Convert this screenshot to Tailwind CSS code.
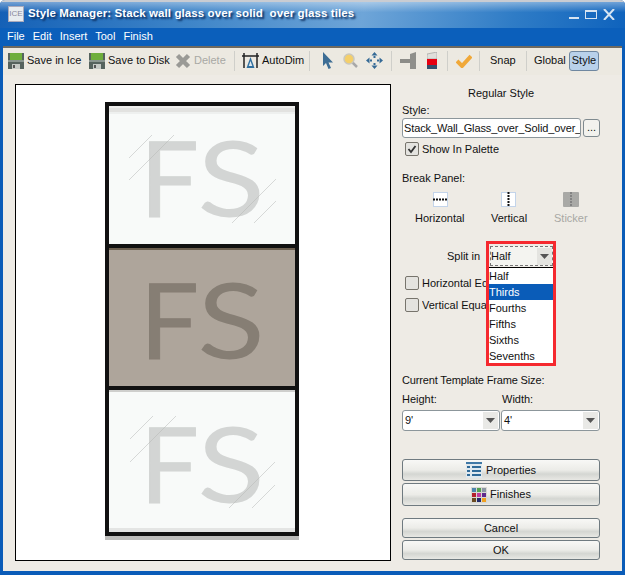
<!DOCTYPE html>
<html lang="en">
<head>
<meta charset="UTF-8">
<title>Style Manager</title>
<script src="https://cdn.jsdelivr.net/npm/@tailwindcss/browser@4"></script>
</head>
<body class="bg-white">
<div class="relative w-[625px] h-[575px] overflow-hidden flex flex-col bg-[#0a5cb8] [font-family:'Liberation_Sans',sans-serif] text-[11px] text-[#111] rounded-t-[5px]">

  <!-- Title bar -->
  <div class="h-[28px] flex items-center pl-[8px] pr-[10px] pb-[2px] border-t-2 border-[#c9ccd2] bg-[linear-gradient(180deg,#ffffff66_0,#ffffff00_40%),linear-gradient(100deg,#1460b6_0%,#3d84c8_30%,#6ea5d8_58%,#2f7cc6_82%,#0f63bd_100%)]">
    <div class="w-[16px] h-[16px] bg-[#e8ecef] border border-[#aab] text-[8px] leading-[14px] text-[#889] text-center">ICE</div>
    <div class="ml-[4px] text-[11.5px] font-bold text-white tracking-[0.1px] [text-shadow:2px_2px_2px_#0a2a5a]">Style Manager: Stack wall glass over solid&nbsp; over glass tiles</div>
    <div class="ml-auto flex items-center gap-[6px]">
      <svg width="10" height="11" viewBox="0 0 10 11"><rect x="0" y="8" width="10" height="2" fill="#d6e4f2"/></svg>
      <svg width="12" height="11" viewBox="0 0 12 11"><rect x="0.5" y="1.500" width="11" height="8" fill="none" stroke="#d6e4f2"/><rect x="0" y="1" width="12" height="2" fill="#d6e4f2"/></svg>
      <svg width="12" height="11" viewBox="0 0 12 11"><path d="M1 0l10 11M11 0L1 11" stroke="#d6e4f2" stroke-width="2"/></svg>
    </div>
  </div>

  <!-- Menu -->
  <div class="h-[18px] flex items-center pl-[7px] pb-[2px] gap-[8px] text-white bg-[#0b5fbb]">
    <span>File</span><span>Edit</span><span>Insert</span><span>Tool</span><span>Finish</span>
  </div>

  <div class="flex-1 flex flex-col mx-[3px] mb-[4px] bg-[#eeebe5] border-t-2 border-[#6f6a60]">
    <!-- Toolbar -->
    <div class="h-[27px] flex items-center pl-[5px] pb-[2px] bg-[#ece9e1] whitespace-nowrap">
      <svg class="w-[16px] h-[16px]" viewBox="0 0 16 16"><rect width="16" height="16" fill="#56635e"/><rect x="2" y="0" width="12" height="7" fill="#6fae3c"/><rect y="7" width="16" height="2" fill="#8a9690"/><rect x="4" y="11" width="8" height="5" fill="#c6cac6"/><rect x="5" y="12" width="2" height="3" fill="#555"/></svg>
      <span class="ml-[3px] w-[53px]">Save in Ice</span>
      <svg class="ml-[9px] w-[16px] h-[16px]" viewBox="0 0 16 16"><rect width="16" height="16" fill="#56635e"/><rect x="2" y="0" width="12" height="7" fill="#6fae3c"/><rect y="7" width="16" height="2" fill="#8a9690"/><rect x="4" y="11" width="8" height="5" fill="#c6cac6"/><rect x="5" y="12" width="2" height="3" fill="#555"/></svg>
      <span class="ml-[3px] w-[59px]">Save to Disk</span>
      <svg class="ml-[8px] w-[16px] h-[16px]" viewBox="0 0 16 16"><path d="M2.500 2.500l11 11M13.500 2.500l-11 11" stroke="#9a9a96" stroke-width="4.500"/></svg>
      <span class="ml-[3px] w-[31px] text-[#a8a8a4]">Delete</span>
      <div class="ml-[9px] w-px h-[20px] bg-[#cfcfca]"></div>
      <svg class="ml-[7px] w-[17px] h-[17px]" viewBox="0 0 17 17"><path d="M2 1v15M15 1v15M0 4h17" stroke="#222" stroke-width="1.500"/><path d="M8.500 5L4.500 16h8z" fill="#2f6f9f"/><path d="M8.500 9l-1.800 5h3.600z" fill="#dfe9ef"/></svg>
      <span class="ml-[3px] w-[39px]">AutoDim</span>
      <div class="ml-[8px] w-px h-[20px] bg-[#cfcfca]"></div>
      <svg class="ml-[12px] w-[11px] h-[17px]" viewBox="0 0 11 17"><path d="M1 0v14l3-3 2.500 6 2.500-1-2.500-5.500H11z" fill="#3d6d94"/></svg>
      <svg class="ml-[10px] w-[15px] h-[15px]" viewBox="0 0 15 15"><path d="M9 9l5 5" stroke="#a8a8a8" stroke-width="2.500"/><circle cx="6" cy="6" r="5" fill="#f4cf6a" stroke="#c9c7bd" stroke-width="1.500"/></svg>
      <svg class="ml-[8px] w-[17px] h-[17px]" viewBox="0 0 17 17" fill="#356a96"><path d="M8.500 0l3 3.500h-6zM8.500 17l3-3.500h-6zM0 8.500l3.500-3v6zM17 8.500l-3.500-3v6z"/><rect x="7.500" y="4" width="2" height="2"/><rect x="7.500" y="11" width="2" height="2"/><rect x="4" y="7.500" width="2" height="2"/><rect x="11" y="7.500" width="2" height="2"/></svg>
      <div class="ml-[8px] w-px h-[20px] bg-[#cfcfca]"></div>
      <svg class="ml-[8px] w-[16px] h-[17px]" viewBox="0 0 16 17"><rect x="0" y="7" width="10" height="4" fill="#8c8c88"/><path d="M10 2l6-2v17h-6z" fill="#8f8f8b"/></svg>
      <svg class="ml-[11px] w-[10px] h-[17px]" viewBox="0 0 10 17"><path d="M0 2l10-2v7H0z" fill="#dfdfdb" stroke="#888" stroke-width=".5"/><rect y="7" width="10" height="6" fill="#e60012"/><rect y="13" width="10" height="4" fill="#33506e"/></svg>
      <div class="ml-[10px] w-px h-[20px] bg-[#cfcfca]"></div>
      <svg class="ml-[8px] w-[16px] h-[14px]" viewBox="0 0 16 14"><path d="M1 7l5 5 9-10" fill="none" stroke="#f0a838" stroke-width="4"/></svg>
      <div class="ml-[7px] w-px h-[20px] bg-[#cfcfca]"></div>
      <span class="ml-[10px] w-[25px]">Snap</span>
      <div class="ml-[11px] w-px h-[20px] bg-[#cfcfca]"></div>
      <span class="ml-[7px] w-[29px]">Global</span>
      <span class="ml-[6px] h-[20px] w-[30px] flex items-center justify-center rounded-[3px] border border-[#6f87a0] bg-[#b9d1ea]">Style</span>
    </div>

    <div class="flex-1 flex pl-[12px] pt-[9px]">
      <!-- Canvas -->
      <div class="w-[376px] h-[477px] bg-white border border-black flex flex-col items-center pt-[17px] pr-[2px]">
        <div class="w-[194px] flex flex-col border-4 border-[#111] gap-[4px] bg-[#111] shadow-[0_4px_0_#bdbdbb]">
          <div class="relative h-[138px] bg-[#f8faf9] flex items-center pl-[31px] overflow-hidden">
            <div class="absolute top-0 inset-x-0 h-[8px] bg-[#e2e2e0] border-t-2 border-b-2 border-t-[#efefed] border-b-[#eef0ef]"></div>
            <span class="[font-family:Lato,sans-serif] text-[104px] leading-none text-[#d3d5d4] mt-[4px] flex"><span class="[-webkit-text-stroke-width:1px]">F</span><span class="ml-[4px] scale-x-[1.2]">S</span></span>
            <svg class="absolute inset-0" width="186" height="138"><path d="M20 52L43 29M20 74L65 29M123 117L167 73M145 117L167 95" stroke="#b4b6b5" stroke-width=".5" fill="none"/></svg>
          </div>
          <div class="relative h-[138px] bg-[#aea59b] flex items-center pl-[31px] overflow-hidden">
            <div class="absolute top-0 inset-x-0 h-[2px] bg-[#6b5e4e]"></div>
            <span class="[font-family:Lato,sans-serif] text-[104px] leading-none text-[#867e74] mt-[4px] flex"><span class="[-webkit-text-stroke-width:1px]">F</span><span class="ml-[4px] scale-x-[1.2]">S</span></span>
          </div>
          <div class="relative h-[142px] bg-[#f8faf9] flex items-center pl-[31px] overflow-hidden">
            <div class="absolute top-0 inset-x-0 h-[2px] bg-[#cfcfcd]"></div>
            <div class="absolute bottom-0 inset-x-0 h-[4px] bg-[#e4e5e4]"></div>
            <span class="[font-family:Lato,sans-serif] text-[104px] leading-none text-[#d3d5d4] mt-[4px] flex"><span class="[-webkit-text-stroke-width:1px]">F</span><span class="ml-[4px] scale-x-[1.2]">S</span></span>
            <svg class="absolute inset-0" width="186" height="142"><path d="M21 49L44 26M21 72L67 26M120 118L166 72M143 118L166 95" stroke="#b4b6b5" stroke-width=".5" fill="none"/></svg>
          </div>
        </div>
      </div>

      <!-- Right panel -->
      <div class="ml-[11px] w-[198px] flex flex-col">
        <div class="h-[18px] leading-[18px] text-center">Regular Style</div>
        <div class="h-[16px] leading-[16px]">Style:</div>
        <div class="h-[20px] flex gap-[2px]">
          <div class="w-[179px] border border-[#8c969b] rounded-[3px] bg-white pl-[1px] leading-[18px] tracking-[-0.1px] overflow-hidden whitespace-nowrap">Stack_Wall_Glass_over_Solid_over_Glass</div>
          <div class="w-[17px] h-[18px] mt-[1px] border border-[#7f8a8f] rounded-[3px] bg-[#f2f2ee] text-center leading-[14px]">...</div>
        </div>
        <div class="mt-[4px] h-[14px] flex items-center pl-[3px]">
          <div class="w-[14px] h-[14px] border border-[#77746c] rounded-[2px] bg-[#e4e3df] flex items-center justify-center">
            <svg width="10" height="10" viewBox="0 0 10 10"><path d="M1.500 5l2.500 3 4.500-6" fill="none" stroke="#333" stroke-width="1.800"/></svg>
          </div>
          <span class="ml-[3px]">Show In Palette</span>
        </div>
        <div class="mt-[14px] h-[16px] leading-[16px]">Break Panel:</div>
        <div class="mt-[6px] h-[17px] flex">
          <svg class="ml-[31px] w-[15px] h-[15px]" viewBox="0 0 15 15"><rect x=".5" y=".5" width="14" height="14" fill="#fff" stroke="#c3d4ea"/><path d="M0 7.500h15" stroke="#111" stroke-width="2" stroke-dasharray="2 1"/></svg>
          <svg class="ml-[53px] w-[15px] h-[15px]" viewBox="0 0 15 15"><rect x=".5" y=".5" width="14" height="14" fill="#fff" stroke="#c3d4ea"/><path d="M7.500 0v15" stroke="#111" stroke-width="2" stroke-dasharray="2 1"/></svg>
          <svg class="ml-[47px] w-[16px] h-[15px]" viewBox="0 0 16 15"><rect x="0" y="0" width="16" height="15" rx="1" fill="#a9a9a6"/><path d="M8 0v15" stroke="#777" stroke-width="1.500" stroke-dasharray="2 1"/></svg>
        </div>
        <div class="mt-[1px] h-[16px] leading-[16px] flex">
          <span class="ml-[13px] w-[76px]">Horizontal</span>
          <span class="w-[63px]">Vertical</span>
          <span class="text-[#a8a8a4]">Sticker</span>
        </div>
        <div class="mt-[20px] h-[20px] flex items-center">
          <span class="ml-[45px] w-[43px]">Split in</span>
          <div class="w-[63px] h-[20px] flex items-center justify-between border border-dashed border-[#777] bg-[#f4f4f0]">
            <span>Half</span>
            <div class="w-[15px] h-[17px] flex items-center justify-center bg-[#e4e4e0]"><svg width="9" height="5" viewBox="0 0 9 5"><path d="M0 0h9L4.500 5z" fill="#555"/></svg></div>
          </div>
        </div>
        <div class="mt-[10px] h-[14px] flex items-center pl-[3px]">
          <div class="w-[14px] h-[14px] border border-[#77746c] rounded-[2px] bg-[#e4e3df]"></div>
          <span class="ml-[3px] w-[64px] overflow-hidden whitespace-nowrap">Horizontal Equal</span>
        </div>
        <div class="mt-[8px] h-[14px] flex items-center pl-[3px]">
          <div class="w-[14px] h-[14px] border border-[#77746c] rounded-[2px] bg-[#e4e3df]"></div>
          <span class="ml-[3px] w-[64px] overflow-hidden whitespace-nowrap">Vertical Equal</span>
        </div>
        <div class="mt-[60px] h-[16px] leading-[16px] tracking-[-0.15px]">Current Template Frame Size:</div>
        <div class="mt-[3px] h-[16px] leading-[16px] flex"><span class="w-[100px]">Height:</span><span>Width:</span></div>
        <div class="mt-[3px] h-[21px] flex gap-[1px]">
          <div class="w-[98px] flex items-center justify-between border border-[#8c969b] rounded-[3px] bg-white pl-[2px] pr-[1px]"><span>9'</span><div class="w-[15px] h-[17px] flex items-center justify-center bg-[#e9e9e6]"><svg width="9" height="5" viewBox="0 0 9 5"><path d="M0 0h9L4.500 5z" fill="#555"/></svg></div></div>
          <div class="w-[99px] flex items-center justify-between border border-[#8c969b] rounded-[3px] bg-white pl-[2px] pr-[1px]"><span>4'</span><div class="w-[15px] h-[17px] flex items-center justify-center bg-[#e9e9e6]"><svg width="9" height="5" viewBox="0 0 9 5"><path d="M0 0h9L4.500 5z" fill="#555"/></svg></div></div>
        </div>
        <button class="mt-[28px] h-[22px] flex items-center justify-center gap-[4px] border border-[#6f7a80] rounded-[3px] bg-[linear-gradient(#f8f8f6,#ecece8_50%,#d4d6d2_70%,#e8e8e4)]">
          <svg width="16" height="16" viewBox="0 0 16 16"><rect width="16" height="16" fill="#dfe8ee"/><rect width="16" height="2" fill="#3f78a6"/><path d="M1 5h3M6 5h9M1 9h3M6 9h9M1 13h3M6 13h9" stroke="#2f6a98" stroke-width="2"/></svg>
          Properties
        </button>
        <button class="mt-[2px] h-[23px] flex items-center justify-center gap-[3px] border border-[#6f7a80] rounded-[3px] bg-[linear-gradient(#f8f8f6,#ecece8_50%,#d4d6d2_70%,#e8e8e4)]">
          <svg width="16" height="16" viewBox="0 0 16 16"><rect width="16" height="16" fill="#d8d8d4"/><rect x="1" y="1" width="4" height="4" fill="#4d86ad"/><rect x="6" y="1" width="4" height="4" fill="#53a050"/><rect x="11" y="1" width="4" height="4" fill="#8b97a3"/><rect x="1" y="6" width="4" height="4" fill="#b3202c"/><rect x="6" y="6" width="4" height="4" fill="#c03aa0"/><rect x="11" y="6" width="4" height="4" fill="#5e2c8c"/><rect x="1" y="11" width="4" height="4" fill="#6a4a22"/><rect x="6" y="11" width="4" height="4" fill="#232a6a"/><rect x="11" y="11" width="4" height="4" fill="#f0a020"/></svg>
          Finishes
        </button>
        <button class="mt-[12px] h-[20px] border border-[#6f7a80] rounded-[3px] bg-[linear-gradient(#f8f8f6,#ecece8_50%,#d4d6d2_70%,#e8e8e4)]">Cancel</button>
        <button class="mt-[2px] h-[20px] border border-[#6f7a80] rounded-[3px] bg-[linear-gradient(#f8f8f6,#ecece8_50%,#d4d6d2_70%,#e8e8e4)]">OK</button>
      </div>
    </div>
  </div>

  <!-- Open dropdown and red highlight -->
  <div class="absolute left-[489px] top-[267px] w-[64px] h-[97px] bg-white border-t border-black">
    <div class="h-[16px] leading-[16px]">Half</div>
    <div class="h-[16px] leading-[16px] bg-[#0a5cb8] text-white">Thirds</div>
    <div class="h-[16px] leading-[16px]">Fourths</div>
    <div class="h-[16px] leading-[16px]">Fifths</div>
    <div class="h-[16px] leading-[16px]">Sixths</div>
    <div class="h-[16px] leading-[16px]">Sevenths</div>
  </div>
  <div class="absolute left-[486px] top-[241px] w-[70px] h-[125px] border-[3px] border-[#f5292f]"></div>
</div>
</body>
</html>
